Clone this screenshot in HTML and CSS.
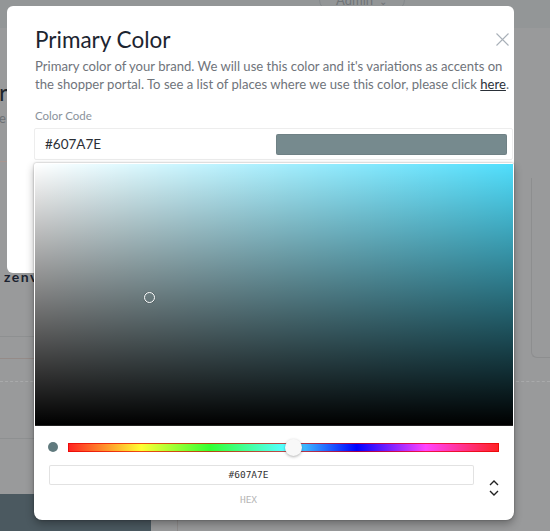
FILE: index.html
```html
<!DOCTYPE html>
<html>
<head>
<meta charset="utf-8">
<link rel="stylesheet" href="styles.css">
</head>
<body>
<div class="page">
  <div class="bg">
    <header class="topbar">
      <div class="admin">Admin <span class="chev">&#8964;</span></div>
    </header>
    <div class="bg-body">
      <div class="bg-left">
        <div class="bg-title">r</div>
        <div class="bg-sub">e</div>
        <div class="bg-rule pink"></div>
        <div class="bg-brand">zenv</div>
        <div class="bg-rule r1"></div>
        <div class="bg-rule brown"></div>
        <div class="bg-dash"></div>
        <div class="bg-rule r2"></div>
        <div class="bg-bottom"><div class="bg-btn"></div><div class="bg-next"></div></div>
      </div>
      <div class="bg-right">
        <div class="bg-cards"><div class="bg-card"></div><div class="bg-card second"></div></div>
        <div class="bg-dash right"></div>
      </div>
    </div>
  </div>

  <div class="modal">
    <div class="modal-head">
      <h2 class="title">Primary Color</h2>
      <span class="close"><svg width="13" height="13" viewBox="0 0 13 13"><path d="M0.5 0.5L12.5 12.5M12.5 0.5L0.5 12.5" stroke="#a9b0b8" stroke-width="1.1" fill="none"/></svg></span>
    </div>
    <p class="desc">Primary color of your brand. We will use this color and it's variations as accents on the shopper portal. To see a list of places where we use this color, please click <a class="link">here</a>.</p>
    <div class="label">Color Code</div>
    <div class="code-input"><span class="code-text">#607A7E</span><span class="swatch"></span></div>
  </div>

  <div class="picker">
    <div class="sat">
      <div class="sat-white"></div>
      <div class="sat-black"></div>
      <span class="sat-cursor"></span>
    </div>
    <div class="picker-body">
      <div class="hue-row">
        <span class="dot"></span>
        <div class="hue"><span class="thumb"></span></div>
      </div>
      <div class="fields">
        <div class="field">
          <div class="hex">#607A7E</div>
          <div class="hex-label">HEX</div>
        </div>
        <div class="toggle">
          <svg width="12" height="18" viewBox="0 0 12 18"><path d="M2 6L6 2L10 6M2 12L6 16L10 12" stroke="#222" stroke-width="1.4" fill="none"/></svg>
        </div>
      </div>
    </div>
  </div>
</div>
</body>
</html>
```
FILE: styles.css
```css
* { box-sizing: border-box; }
html, body { margin: 0; padding: 0; }
body { font-family: Lato, "Noto Sans", sans-serif; }

.page {
  position: relative;
  width: 550px;
  height: 531px;
  overflow: hidden;
  background: #999a9b;
}

/* background page (under overlay) */
.bg { width: 550px; height: 531px; }
.topbar {
  height: 28px;
  display: flex;
  padding-left: 319px;
  background: #939697;
}
.admin {
  width: 86px;
  height: 22px;
  margin-top: -11px;
  border: 1px solid #85898c;
  border-radius: 11px;
  color: #707478;
  font-size: 13px;
  line-height: 20px;
  padding-left: 16px;
}
.chev { font-size: 10px; margin-left: 3px; }
.bg-body { display: flex; justify-content: space-between; }
.bg-left { width: 200px; }
.bg-title { margin-top: 50px; font-size: 24px; line-height: 28px; color: #1d242c; margin-left: -1px; }
.bg-sub { margin-top: 4px; font-size: 13px; line-height: 16px; color: #6d7175; margin-left: -1px; }
.bg-rule { height: 1px; background: #8e9091; }
.bg-rule.pink { margin-top: 35px; background: #a89690; }
.bg-brand { margin-top: 107px; font-size: 14px; font-weight: 700; letter-spacing: 1.5px; color: #1b2230; line-height: 16px; margin-left: 4px; }
.bg-rule.r1 { margin-top: 51px; }
.bg-rule.brown { margin-top: 21px; background: #958b88; }
.bg-dash { margin-top: 22px; height: 1px; border-top: 1px dashed #a9aaab; }
.bg-rule.r2 { margin-top: 56px; }
.bg-bottom { margin-top: 55px; display: flex; height: 40px; }
.bg-btn { width: 151px; background: #4b5960; }
.bg-next { width: 49px; border-right: 1px solid #8f8c8b; margin-left: -22px; }
.bg-right { width: 60px; }
.bg-cards { margin-top: 150px; display: flex; gap: 21px; height: 180px; }
.bg-card { width: 26px; border: 1px solid #8d8e8f; border-radius: 0 0 6px 6px; border-top: none; }
.bg-card.second { border-right: none; border-radius: 0 0 0 6px; }
.bg-dash.right { margin-top: 23px; }

/* modal */
.modal {
  position: absolute;
  left: 7px;
  top: 6px;
  width: 507px;
  height: 267px;
  background: #fff;
  border-radius: 6px;
  padding: 20px 1px 0 27px;
}
.modal-head { display: flex; justify-content: space-between; align-items: flex-start; }
.title {
  margin: 0 0 0 1px;
  font-weight: 400;
  font-size: 22.5px;
  line-height: 28px;
  color: #1c2430;
}
.close { margin: 7px 4px 0 0; width: 13px; height: 13px; display: block; }
.close svg { display: block; }
.desc {
  margin: 3px -5px 0 1px;
  font-size: 13.1px;
  line-height: 18px;
  color: #6f747b;
}
.link { color: #2a3038; text-decoration: underline; }
.label {
  margin: 16px 0 0 1px;
  font-size: 11.5px;
  line-height: 14px;
  color: #8a929b;
}
.code-input {
  margin-top: 5px;
  height: 32px;
  border: 1px solid #ededed;
  border-radius: 2px;
  display: flex;
  align-items: center;
  justify-content: space-between;
  padding: 0 5px 0 10px;
}
.code-text { font-size: 13.5px; color: #2a2f36; }
.swatch {
  width: 231px;
  height: 21px;
  background: #768a8e;
  border-radius: 2px;
  box-shadow: inset 0 0 0 1px rgba(0,0,0,0.06);
}

/* picker */
.picker {
  position: absolute;
  left: 34px;
  top: 163px;
  width: 480px;
  height: 357px;
  background: #fff;
  border-radius: 2px 2px 8px 8px;
  box-shadow: 0 0 2px rgba(0,0,0,0.35), 0 4px 8px rgba(0,0,0,0.3);
  padding: 1px 1px 0 1px;
}
.sat {
  position: relative;
  height: 262px;
  background: rgb(80, 222, 252);
  border-bottom: 1px solid #222;
}
.sat-white, .sat-black { position: absolute; inset: 0; }
.sat-white { background: linear-gradient(to right, #fff, rgba(255,255,255,0)); }
.sat-black { background: linear-gradient(to bottom, rgba(0,0,0,0), #000); }
.sat-cursor {
  position: absolute;
  left: 109px;
  top: 128px;
  width: 11px;
  height: 11px;
  border-radius: 50%;
  border: 1.5px solid #fff;
  box-shadow: 0 0 1px rgba(0,0,0,0.5);
}
.picker-body { padding: 12px 13px 0 13px; }
.hue-row { display: flex; align-items: center; gap: 10px; height: 18px; }
.dot { width: 10px; height: 10px; border-radius: 50%; background: #607a7e; flex: none; }
.hue {
  position: relative;
  flex: 1;
  height: 9px;
  margin-right: 1px;
  background: linear-gradient(to right, #f22 0%, #ff3 17%, #3f3 33%, #5ff 50%, #00f 67%, #f4f 83%, #f22 100%);
  box-shadow: inset 0 0 0 1px rgba(230,0,0,0.7);
}
.thumb {
  position: absolute;
  left: 217px;
  top: -4px;
  width: 17px;
  height: 17px;
  border-radius: 50%;
  background: #f8f8f8;
  box-shadow: 0 1px 3px rgba(0,0,0,0.3);
}
.fields { display: flex; align-items: center; margin-top: 9px; }
.field { width: 425px; margin-left: 1px; }
.hex {
  height: 20px;
  border-radius: 2px;
  box-shadow: inset 0 0 0 1px #e2e2e2;
  text-align: center;
  padding-right: 26px;
  font-family: "DejaVu Sans Mono", monospace;
  font-size: 9.5px;
  line-height: 20px;
  color: #333;
}
.hex-label {
  margin-top: 9px;
  text-align: center;
  padding-right: 26px;
  font-family: "DejaVu Sans Mono", monospace;
  font-size: 9.5px;
  line-height: 12px;
  color: #b5b5b5;
}
.toggle { flex: 1; display: flex; justify-content: center; padding-left: 14px; padding-top: 4px; }
.toggle svg { display: block; }
```
